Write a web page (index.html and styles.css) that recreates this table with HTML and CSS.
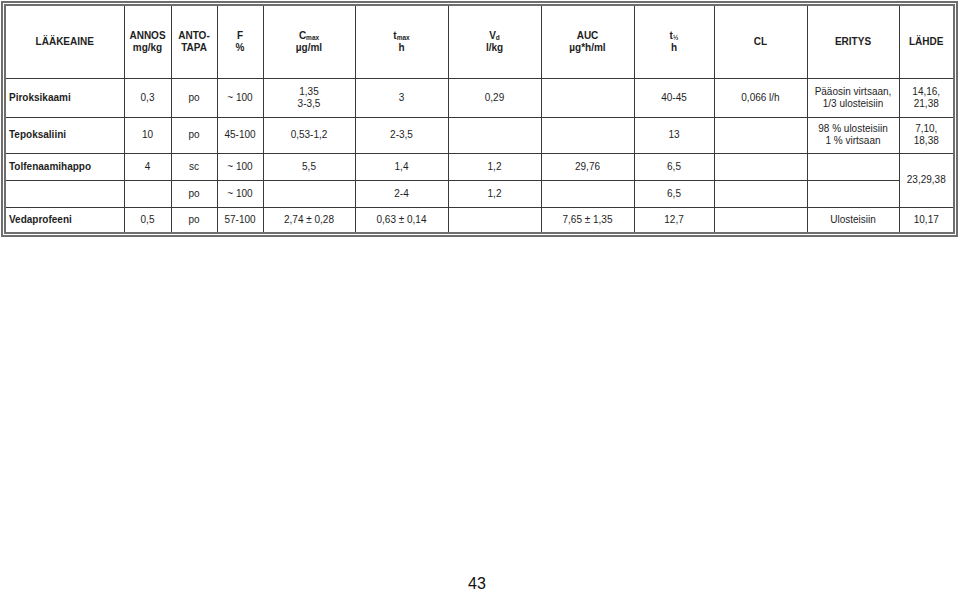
FILE: index.html
```html
<!DOCTYPE html>
<html lang="fi">
<head>
<meta charset="utf-8">
<title>Taulukko</title>
<link rel="stylesheet" href="styles.css">
</head>
<body>
<div class="frame">
<table class="pk">
<colgroup>
<col class="c1"><col class="c2"><col class="c3"><col class="c4"><col class="c5"><col class="c6"><col class="c7"><col class="c8"><col class="c9"><col class="c10"><col class="c11"><col class="c12">
</colgroup>
<thead>
<tr class="rh">
<th>LÄÄKEAINE</th>
<th>ANNOS<br>mg/kg</th>
<th>ANTO-<br>TAPA</th>
<th>F<br>%</th>
<th>C<sub>max</sub><br>µg/ml</th>
<th>t<sub>max</sub><br>h</th>
<th>V<sub>d</sub><br>l/kg</th>
<th>AUC<br>µg*h/ml</th>
<th>t<sub>½</sub><br>h</th>
<th>CL</th>
<th>ERITYS</th>
<th>LÄHDE</th>
</tr>
</thead>
<tbody>
<tr class="r1">
<td class="name">Piroksikaami</td>
<td>0,3</td>
<td>po</td>
<td>~ 100</td>
<td>1,35<br>3-3,5</td>
<td>3</td>
<td>0,29</td>
<td></td>
<td>40-45</td>
<td>0,066 l/h</td>
<td>Pääosin virtsaan,<br>1/3 ulosteisiin</td>
<td>14,16,<br>21,38</td>
</tr>
<tr class="r2">
<td class="name">Tepoksaliini</td>
<td>10</td>
<td>po</td>
<td>45-100</td>
<td>0,53-1,2</td>
<td>2-3,5</td>
<td></td>
<td></td>
<td>13</td>
<td></td>
<td>98 % ulosteisiin<br>1 % virtsaan</td>
<td>7,10,<br>18,38</td>
</tr>
<tr class="r3">
<td class="name">Tolfenaamihappo</td>
<td>4</td>
<td>sc</td>
<td>~ 100</td>
<td>5,5</td>
<td>1,4</td>
<td>1,2</td>
<td>29,76</td>
<td>6,5</td>
<td></td>
<td></td>
<td rowspan="2">23,29,38</td>
</tr>
<tr class="r4">
<td class="name"></td>
<td></td>
<td>po</td>
<td>~ 100</td>
<td></td>
<td>2-4</td>
<td>1,2</td>
<td></td>
<td>6,5</td>
<td></td>
<td></td>
</tr>
<tr class="r5">
<td class="name">Vedaprofeeni</td>
<td>0,5</td>
<td>po</td>
<td>57-100</td>
<td>2,74 ± 0,28</td>
<td>0,63 ± 0,14</td>
<td></td>
<td>7,65 ± 1,35</td>
<td>12,7</td>
<td></td>
<td>Ulosteisiin</td>
<td>10,17</td>
</tr>
</tbody>
</table>
</div>
<div class="pageno">43</div>
</body>
</html>
```
FILE: styles.css
```css
html, body {
  margin: 0;
  padding: 0;
  background: #ffffff;
}
body {
  font-family: "Liberation Sans", Arial, sans-serif;
  color: #1e1e1e;
}
.frame {
  margin: 1px 0 0 1px;
  width: 947px;
  border: 5px double #6e6e6e;
}
.pk {
  width: 947px;
  table-layout: fixed;
  border-collapse: collapse;
  border-style: hidden;
  font-size: 10px;
  line-height: 12px;
}
.pk th, .pk td {
  border: 1px solid #3a3a3a;
  padding: 0 2px;
  text-align: center;
  vertical-align: middle;
  overflow: hidden;
}
.pk th {
  font-weight: bold;
  line-height: 12px;
}
.pk td.name {
  text-align: left;
  font-weight: bold;
  padding-left: 3px;
}
.pk sub {
  font-size: 6.5px;
  vertical-align: baseline;
  position: relative;
  top: 1px;
  line-height: 0;
}
.c1 { width: 118px; }
.c2 { width: 47px; }
.c3 { width: 46px; }
.c4 { width: 46px; }
.c5 { width: 92px; }
.c6 { width: 93px; }
.c7 { width: 93px; }
.c8 { width: 93px; }
.c9 { width: 80px; }
.c10 { width: 93px; }
.c11 { width: 92px; }
.c12 { width: 54px; }
.rh { height: 72px; }
.r1 { height: 39px; }
.r2 { height: 36px; }
.r3 { height: 27px; }
.r4 { height: 27px; }
.r5 { height: 25px; }
.pageno {
  margin-top: 338px;
  width: 954px;
  text-align: center;
  font-size: 16px;
  line-height: 18px;
  color: #111;
}
```
